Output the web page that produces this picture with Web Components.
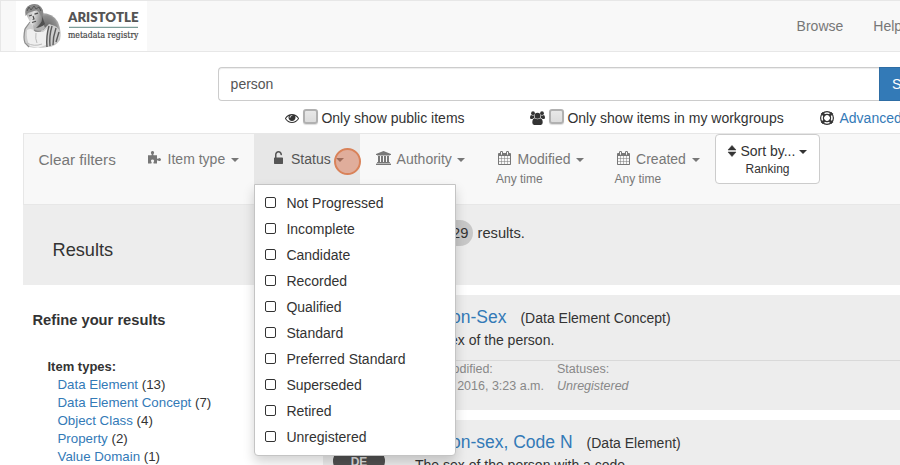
<!DOCTYPE html>
<html lang="en"><head><meta charset="utf-8"><title>Aristotle metadata registry</title>
<style>
html,body{margin:0;width:900px;height:465px;overflow:hidden;background:#fff}
body{font:14px/20px "Liberation Sans",Arial,sans-serif;color:#333}
</style></head><body>
<registry-app></registry-app>
<script>
const P={
eye:['0 0 1792 1792','<path d="M1664 960q-152-236-381-353 61 104 61 225 0 185-131.5 316.5t-316.5 131.5-316.5-131.5-131.5-316.5q0-121 61-225-229 117-381 353 133 205 333.5 326.5t434.5 121.5 434.5-121.5 333.5-326.5zm-720-384q0-20-14-34t-34-14q-125 0-214.5 89.5t-89.5 214.5q0 20 14 34t34 14 34-14 14-34q0-86 61-147t147-61q20 0 34-14t14-34zm848 384q0 34-20 69-140 230-376.5 368.5t-499.5 138.5-499.5-139-376.5-368q-20-35-20-69t20-69q140-229 376.5-368t499.5-139 499.5 139 376.5 368q20 35 20 69z"/>'],
users:['0 0 15 14','<circle cx="7.5" cy="4.8" r="3"/><circle cx="3" cy="2.2" r="1.9"/><circle cx="12" cy="2.2" r="1.9"/><path d="M4.8 7.3Q7.5 9.2 10.2 7.3Q12.7 7.6 12.7 11.6Q12.7 14 10.8 14H4.2Q2.3 14 2.3 11.6Q2.3 7.6 4.8 7.3ZM1.3 4Q2.6 5 4 4.3Q3.8 6 4.5 6.8Q3.2 7 2.4 8H1.3Q0 8 0 6.8Q0 4 1.3 4ZM13.7 4Q12.4 5 11 4.3Q11.2 6 10.5 6.8Q11.8 7 12.6 8H13.7Q15 8 15 6.8Q15 4 13.7 4Z"/>'],
ring:['0 0 14 14','<circle cx="7" cy="7" r="6.4" fill="none" stroke="currentColor" stroke-width="1.2"/><circle cx="7" cy="7" r="3.6" fill="none" stroke="currentColor" stroke-width="1.2"/><path d="M2.8 1.4L5.4 4Q4.4 4.5 4 5.4L1.4 2.8ZM11.2 1.4L8.6 4Q9.6 4.5 10 5.4L12.6 2.8ZM2.8 12.6L5.4 10Q4.4 9.5 4 8.6L1.4 11.2ZM11.2 12.6L8.6 10Q9.6 9.5 10 8.6L12.6 11.2Z" stroke="currentColor" stroke-width="1"/>'],
calendar:['64 0 1664 1792','<path d="M192 1664h288v-288h-288v288zm352 0h320v-288h-320v288zm-352-352h288v-320h-288v320zm352 0h320v-320h-320v320zm-352-384h288v-288h-288v288zm736 736h320v-288h-320v288zm-384-736h320v-288h-320v288zm768 736h288v-288h-288v288zm-384-352h320v-320h-320v320zm-352-864v-288q0-13-9.5-22.5t-22.5-9.5h-64q-13 0-22.5 9.5t-9.5 22.5v288q0 13 9.5 22.5t22.5 9.5h64q13 0 22.5-9.5t9.5-22.5zm736 864h288v-320h-288v320zm-384-384h320v-288h-320v288zm384 0h288v-288h-288v288zm32-480v-288q0-13-9.5-22.5t-22.5-9.5h-64q-13 0-22.5 9.5t-9.5 22.5v288q0 13 9.5 22.5t22.5 9.5h64q13 0 22.5-9.5t9.5-22.5zm384-64v1280q0 52-38 90t-90 38h-1408q-52 0-90-38t-38-90v-1280q0-52 38-90t90-38h128v-96q0-66 47-113t113-47h64q66 0 113 47t47 113v96h384v-96q0-66 47-113t113-47h64q66 0 113 47t47 113v96h128q52 0 90 38t38 90z"/>'],
bank:['0 0 1920 1792','<path d="M960 0l960 384v128h-128q0 26-20.5 45t-48.5 19h-1526q-28 0-48.5-19t-20.5-45h-128v-128zm-704 640h256v768h128v-768h256v768h128v-768h256v768h128v-768h256v768h59q28 0 48.5 19t20.5 45v64h-1664v-64q0-26 20.5-45t48.5-19h59v-768zm1595 960q28 0 48.5 19t20.5 45v128h-1920v-128q0-26 20.5-45t48.5-19h1782z"/>'],
unlock:['320 128 1152 1408','<path d="M1376 768q40 0 68 28t28 68v576q0 40-28 68t-68 28h-960q-40 0-68-28t-28-68v-576q0-40 28-68t68-28h32v-320q0-185 131.5-316.5t316.5-131.5 316.5 131.5 131.5 316.5q0 26-19 45t-45 19h-64q-26 0-45-19t-19-45q0-106-75-181t-181-75-181 75-75 181v320h736z"/>'],
puzzle:['0 0 13 13','<path d="M0 4.2H3.3Q4 4 3.6 3.2Q2.7 2.2 2.9 1.4Q3.3.1 4.5.1Q5.8.1 6.1 1.4Q6.2 2.2 5.4 3.2Q5 4 5.8 4.3H9V7.2Q9.3 8.1 10.1 7.7Q11 6.9 11.9 7.2Q13 7.5 13 8.5Q13 9.7 11.9 10Q11 10.2 10.1 9.4Q9.3 9 9 9.8V12.4H5.8Q5.1 12.1 5.5 11.3Q6.3 10.3 6.1 9.5Q5.7 8.4 4.5 8.4Q3.3 8.4 3 9.5Q2.8 10.3 3.6 11.3Q4 12.1 3.2 12.4H0Z"/>'],
sort:['0 0 8 12','<path d="M0 5L4 .4L8 5ZM0 7H8L4 11.6Z" stroke="currentColor" stroke-width=".5" stroke-linejoin="round"/>']};
function def(n,html){customElements.define(n,class extends HTMLElement{constructor(){super();
const t=document.createElement('template');t.innerHTML=typeof html==='function'?html(this):html;
this.attachShadow({mode:'open'}).append(t.content.cloneNode(true));}});}

def('app-icon',e=>{const p=P[e.getAttribute('name')];return `<style>:host{display:block;flex:none}svg{display:block;width:100%;height:100%;fill:currentColor;overflow:visible}</style><svg viewBox="${p[0]}" preserveAspectRatio="none">${p[1]}</svg>`});

def('registry-logo',`<style>:host{display:block;width:131px;height:50px;background:#fff}svg{display:block}</style>
<svg width="131" height="50" viewBox="16 1 131 50">
<defs><radialGradient id="d" cx=".45" cy=".5" r=".55"><stop offset="0" stop-color="#5d5d5d"/><stop offset=".75" stop-color="#8e8e8e"/><stop offset="1" stop-color="#c4c4c4"/></radialGradient>
<linearGradient id="f" x1="0" x2="1" y1=".3" y2=".6"><stop offset="0" stop-color="#a5a5a5"/><stop offset=".45" stop-color="#e2e2e2"/><stop offset="1" stop-color="#808080"/></linearGradient>
<filter id="b"><feGaussianBlur stdDeviation=".45"/></filter></defs>
<g filter="url(#b)">
<path d="M41 13Q53 13 58 22Q62 32 60 40Q56 46 49 47L35 32Z" fill="url(#d)"/>
<path d="M24 36Q23 25 31 23L36 30L43 30L49 24L55 26Q60 28 60 36Q58 45 48 47Q38 49 29 47Q24 44 24 36Z" fill="#cecece"/>
<path d="M27 30Q32 27 36 32L43 32L48 28L46 45L38 48L30 46Q26 40 27 30Z" fill="#efefef"/>
<path d="M32 21L41 18L45 28Q40 34 34 30Z" fill="#b2b2b2"/>
<path d="M26 14Q25 5 34 4Q41 4 43 12Q44 21 39 25Q34 28 30 22Z" fill="url(#f)"/>
<path d="M25.5 16Q24 7 30 5Q37 2 41 7Q45 12 42 19L40 14Q38 9 34 11L28 13Z" fill="#888"/>
<path d="M27 11L29 7L31 10L34 6L36 9L39 7L41 11" stroke="#555" stroke-width="1" fill="none"/>
<path d="M29 16l3-1m2.5-.8l3.5-1M33 16l1 3-1.4.5M32 22.5l4-1.3" stroke="#4c4c4c" stroke-width="1.2" fill="none"/>
<path d="M42 16Q43 21 39 25L36 28Q42 27 45 24Z" fill="#4f4f4f"/>
<path d="M30 22L25 29Q23 38 25 43L29 47M34 30Q36 32 41 31" stroke="#8d8d8d" stroke-width="1.2" fill="none"/>
<path d="M49 26Q46 36 47 47M52 26Q49 36 50 46M56 28Q53 37 53 45M59 32L56 42" stroke="#5c5c5c" stroke-width="1.4" fill="none"/>
<path d="M27 43Q34 47 42 44M36 33Q35 39 37 43" stroke="#bbb" stroke-width="1" fill="none"/>
</g>
<text x="68" y="21.8" font-family="Lato,sans-serif" font-weight="800" font-size="12.5" fill="#555" textLength="70.5" lengthAdjust="spacingAndGlyphs">ARISTOTLE</text>
<path d="M69 27.3H138" stroke="#5c8580" stroke-width="1"/>
<text x="68" y="38" font-family="DejaVu Serif,serif" font-weight="400" font-size="9" fill="#444" stroke="#444" stroke-width=".2" textLength="70.5" lengthAdjust="spacingAndGlyphs">metadata registry</text></svg>`);

def('top-nav',`<style>:host{display:flex;box-sizing:border-box;height:52px;border:1px solid #e7e7e7;border-right:0;background:#f8f8f8;padding-left:15px;color:#777;white-space:nowrap}nav{display:flex;gap:30px;margin-left:649.6px;padding-top:15px}</style><registry-logo></registry-logo><nav><span>Browse</span><span>Help</span></nav>`);

def('search-box',`<style>:host{display:flex;height:34px;margin:15px 0 0 218px}
.i{flex:none;box-sizing:border-box;width:661px;border:1px solid #ccc;border-right:0;border-radius:4px 0 0 4px;padding:6px 11.6px;line-height:20px;color:#555;box-shadow:inset 0 1px 1px rgba(0,0,0,.075)}
.b{flex:none;box-sizing:border-box;width:70px;background:#337ab7;border:1px solid #2e6da4;color:#fff;padding:6px 12px}</style><div class="i">person</div><div class="b">Search</div>`);

def('scope-option',`<style>:host{display:flex;height:20px;white-space:nowrap}i{box-sizing:border-box;width:15px;height:15px;border:2px solid #b1b1b1;border-radius:3px;background:linear-gradient(#e8e8e8,#dcdcdc);box-shadow:0 1px 1px #ddd;margin:1px 3.4px 0 4px;flex:none}</style><slot name="icon"></slot><i></i><slot></slot>`);

def('scope-row',`<style>:host{display:grid;grid-template-columns:245px 290px 90px;padding:7px 0 0 285px;height:25px;white-space:nowrap}app-icon{width:14px;height:14px;margin-top:3px}.a{display:flex;gap:5.5px;color:#337ab7}.a app-icon{color:#333}.u{width:15px}</style>
<scope-option><app-icon slot="icon" name="eye"></app-icon>Only show public items</scope-option><scope-option><app-icon slot="icon" class="u" name="users"></app-icon>Only show items in my workgroups</scope-option><div class="a"><app-icon name="ring"></app-icon>Advanced</div>`);

def('filter-item',`<style>:host{display:block;box-sizing:border-box;height:50px;padding-top:15px;color:#777;white-space:nowrap}
.r{display:flex;height:20px;align-items:flex-start}.c{width:0;border:4px solid transparent;border-top-color:currentColor;border-bottom:0;margin:9px 0 0 5.6px}::slotted(small){display:block;font-size:12px;line-height:20px}</style><div class="r"><slot name="icon"></slot><slot></slot><span class="c"></span></div><slot name="sub"></slot>`);

def('check-menu',e=>`<style>:host{display:block;box-sizing:border-box;width:202px;height:272px;background:#fff;border:1px solid #c4c4c4;border-radius:0 0 4px 4px;box-shadow:0 6px 12px rgba(0,0,0,.175);padding:5px 0}div{height:26px;display:flex;align-items:center;padding-left:10px;gap:10.4px}i{box-sizing:border-box;width:11px;height:11px;border:1px solid #333;border-radius:2px;margin-top:-1px}</style>${e.getAttribute('options').split('|').map(s=>`<div><i></i><span>${s}</span></div>`).join('')}`);

def('filter-bar',`<style>:host{display:grid;grid-template-columns:107px 123px 106px 121px 119px 114px 108px;box-sizing:border-box;width:900px;height:72px;margin-left:23px;border:1px solid #e7e7e7;background:#f8f8f8;position:relative;white-space:nowrap}
.clear{font-size:15.3px;color:#777;padding:16px 0 0 14.5px}
.p{padding-left:17px}.p app-icon{width:13px;height:13px;margin:2px 6.6px 0 0}
.s{background:#e7e7e7;color:#555;padding-left:20px;height:51px}.s app-icon{width:9px;height:12px;margin:3px 8px 0 0}
.au{padding-left:16px}.au app-icon{width:15px;height:14px;margin:2px 5.6px 0 0}
.d app-icon{width:13px;height:14px;margin:2px 6.6px 0 2px}
.d{padding-left:15px}.d2{padding-left:14.5px}
.o{box-sizing:border-box;width:105px;height:50px;border:1px solid #ccc;border-radius:4px;background:#fff;padding:6px 11px 0;color:#333;margin-left:1px}.o div{display:flex}.o app-icon{width:8px;height:12px;margin:4px 4.4px 0 1px}.o b{border:4px solid transparent;border-top-color:#333;border-bottom:0;margin:9px 0 0 4px;height:0}.o small{display:block;text-align:center;font-size:12px;line-height:17px}
check-menu{position:absolute;left:230px;top:50px;color:#333;z-index:3}
.h{position:absolute;left:310px;top:14px;box-sizing:border-box;width:27px;height:27px;border-radius:50%;background:rgba(218,126,92,.55);border:2px solid #d98259;z-index:4}</style>
<div class="clear">Clear filters</div>
<filter-item class="p"><app-icon slot="icon" name="puzzle"></app-icon>Item type</filter-item>
<filter-item class="s"><app-icon slot="icon" name="unlock"></app-icon>Status</filter-item>
<filter-item class="au"><app-icon slot="icon" name="bank"></app-icon>Authority</filter-item>
<filter-item class="d"><app-icon slot="icon" name="calendar"></app-icon>Modified<small slot="sub">Any time</small></filter-item>
<filter-item class="d d2"><app-icon slot="icon" name="calendar"></app-icon>Created<small slot="sub">Any time</small></filter-item>
<div class="o"><div><app-icon name="sort"></app-icon>Sort by...<b></b></div><small>Ranking</small></div>
<check-menu options="Not Progressed|Incomplete|Candidate|Recorded|Qualified|Standard|Preferred Standard|Superseded|Retired|Unregistered"></check-menu><span class="h"></span>`);

def('result-banner',`<style>:host{display:grid;grid-template-columns:392px 1fr;height:80px;margin-left:23px;background:#ededed}h1{font-size:18.2px;line-height:20px;font-weight:400;margin:35px 0 0 29.5px}div{display:flex;align-items:center;height:26px;font-size:14.7px;margin-top:15px}b{font-weight:400;background:#c8c8c8;border-radius:13px;height:26px;line-height:26px;width:30px;box-sizing:border-box;padding-left:9px;margin:0 4.5px 0 28px}</style><h1>Results</h1><div><b>29</b>results.</div>`);

def('facet-list',`<style>:host{display:block;padding:25px 0 0 32.5px;white-space:nowrap}h2{font-size:14.7px;line-height:20px;margin:0}h3{font-size:13px;line-height:18px;margin:28px 0 0 15px}ul{list-style:none;padding:0 0 0 25px;margin:0;font-size:13.3px;line-height:18px}a{color:#337ab7}</style><h2>Refine your results</h2><h3>Item types:</h3><ul><li><a>Data Element</a> (13)<li><a>Data Element Concept</a> (7)<li><a>Object Class</a> (4)<li><a>Property</a> (2)<li><a>Value Domain</a> (1)</ul>`);

def('result-card',e=>`<style>:host{display:grid;grid-template-columns:92px 1fr;height:115px;background:#ededed;white-space:nowrap;overflow:hidden}.pill{width:52px;height:24px;border-radius:12px;background:#505050;color:#ddd;font-weight:bold;font-size:12px;line-height:26px;text-align:center;margin:29px 0 0 10px}.t{display:flex;height:24px;align-items:baseline;padding-top:10px;gap:14px}.t a{font-size:17.5px;line-height:24px;color:#337ab7}p{margin:1px 0 0}.m{display:grid;grid-template-columns:142px 1fr;border-top:1px solid #d9d9d9;margin-top:10px;font-size:12.5px;line-height:17px;color:#888}</style><div><div class="pill">${e.getAttribute('badge')}</div></div><section><div class="t"><a>${e.getAttribute('name')}</a><span>(${e.getAttribute('kind')})</span></div><p><slot></slot></p><div class="m"><span>Last modified:<br>Nov. 8, 2016, 3:23 a.m.</span><span>Statuses:<br><em>Unregistered</em></span></div></section>`);

def('registry-app',`<style>:host{display:block;width:900px;height:465px;overflow:hidden}main{display:grid;grid-template-columns:323px 577px}.r{display:grid;gap:10px;padding-top:10px}</style><top-nav></top-nav><search-box></search-box><scope-row></scope-row><filter-bar></filter-bar><result-banner></result-banner><main><facet-list></facet-list><div class="r"><result-card badge="DEC" name="Person-Sex" kind="Data Element Concept">The sex of the person.</result-card><result-card badge="DE" name="Person-sex, Code N" kind="Data Element">The sex of the person with a code.</result-card></div></main>`);
</script></body></html>
